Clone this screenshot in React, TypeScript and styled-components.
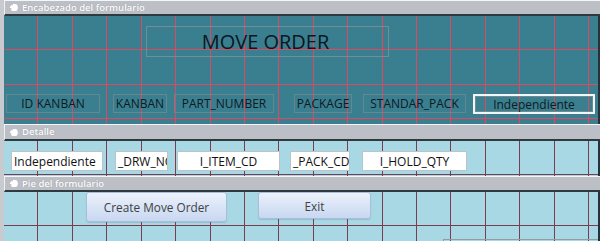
import React from "react";
import styled, { createGlobalStyle } from "styled-components";

const Global = createGlobalStyle`
  html, body { margin: 0; padding: 0; background: #c7cacf; }
  body { font-family: "Open Sans", "Liberation Sans", sans-serif; overflow: hidden; }
  * { box-sizing: border-box; }
`;

const Frame = styled.div`
  width: 600px;
  height: 241px;
  overflow: hidden;
  background: #c7cacf;
  padding-left: 4px;
  display: flex;
  flex-direction: column;
`;

const SectionBar = styled.div<{ $h: number }>`
  height: ${(p) => p.$h}px;
  flex: none;
  background: #bcbfc5;
  border-top: 1px solid #f5f6f8;
  border-left: 1px solid #eef0f2;
  border-bottom: 2px solid #2d3a40;
  display: flex;
  align-items: center;
  gap: 4px;
  padding-left: 4px;
`;

const BarTitle = styled.span`
  color: #ffffff;
  font-size: 9.5px;
  font-weight: 600;
  line-height: 12px;
  text-shadow: 0 0 1px rgba(90, 92, 100, 0.45);
  white-space: nowrap;
`;

const Canvas = styled.div<{ $h?: number; $bg: string; $line: string }>`
  ${(p) => (p.$h ? `height: ${p.$h}px; flex: none;` : "flex: 1;")}
  background-color: ${(p) => p.$bg};
  background-image: repeating-linear-gradient(
      to right,
      transparent 0 33.42px,
      ${(p) => p.$line} 33.42px 34.42px
    ),
    repeating-linear-gradient(
      to bottom,
      transparent 0 33.42px,
      ${(p) => p.$line} 33.42px 34.42px
    );
  border-right: 2px solid #25323a;
  display: flex;
  flex-direction: column;
  overflow: hidden;
`;

const HeaderCanvas = styled(Canvas)`
  padding-top: 10px;
`;

const DetailCanvas = styled(Canvas)`
  padding-top: 10px;
`;

const TitleBox = styled.div`
  margin-left: 142px;
  width: 243px;
  height: 31px;
  border: 1px solid #6f8e96;
  display: flex;
  align-items: center;
  justify-content: center;
  font-size: 20px;
  color: #0d161c;
  padding-right: 4px;
`;

const Row = styled.div<{ $mt?: number }>`
  display: flex;
  align-items: flex-start;
  margin-top: ${(p) => p.$mt ?? 0}px;
`;

const Label = styled.div<{ $w: number; $ml: number; $selected?: boolean }>`
  width: ${(p) => p.$w}px;
  margin-left: ${(p) => p.$ml}px;
  height: ${(p) => (p.$selected ? 20 : 19)}px;
  border: ${(p) => (p.$selected ? "2px solid #f2f6f7" : "1px solid #66878f")};
  box-shadow: ${(p) => (p.$selected ? "inset 0 0 0 1px #6c8c94" : "none")};
  display: flex;
  align-items: center;
  justify-content: center;
  font-size: 12px;
  color: #0e1920;
  white-space: nowrap;
  overflow: hidden;
`;

const Field = styled.div<{ $w: number; $ml: number; $align: "left" | "center" }>`
  width: ${(p) => p.$w}px;
  margin-left: ${(p) => p.$ml}px;
  height: 20px;
  background: #ffffff;
  border: 1px solid #bcc4c7;
  display: flex;
  align-items: center;
  justify-content: ${(p) => (p.$align === "center" ? "center" : "flex-start")};
  padding-left: ${(p) => (p.$align === "center" ? 0 : 2)}px;
  font-size: 12px;
  color: #111;
  white-space: nowrap;
  overflow: hidden;
`;

const Button = styled.div<{ $w: number; $h: number; $ml: number }>`
  width: ${(p) => p.$w}px;
  height: ${(p) => p.$h}px;
  margin-left: ${(p) => p.$ml}px;
  background: linear-gradient(#eef3fc, #dbe5f6 45%, #c8d8f1);
  border: 1px solid #a9bddc;
  border-radius: 3px;
  box-shadow: 0 1px 1px rgba(60, 80, 110, 0.18);
  display: flex;
  align-items: center;
  justify-content: center;
  font-size: 11.8px;
  color: #3e4144;
`;

const GhostBox = styled.div`
  margin-left: 439px;
  width: 160px;
  height: 6px;
  border-top: 1px solid #8e9ea4;
  border-left: 1px solid #8e9ea4;
`;

const SelectorIcon = () => (
  <svg width="9" height="9" viewBox="0 0 9 9" aria-hidden>
    <path
      d="M0.6 4.4 L2.4 2 L3.3 2.6 L4 0.9 L6.3 0.9 Q8.8 1.1 8.8 4.6 Q8.8 8.1 6.3 8.1 L3.4 8.1 L1.8 6.8 L2.7 5.5 Z"
      fill="#ffffff"
    />
  </svg>
);

const Bar = ({ title, h }: { title: string; h: number }) => (
  <SectionBar $h={h}>
    <SelectorIcon />
    <BarTitle>{title}</BarTitle>
  </SectionBar>
);

const headerLabels = [
  { t: "ID KANBAN", w: 94, ml: 2 },
  { t: "KANBAN", w: 54, ml: 13 },
  { t: "PART_NUMBER", w: 100, ml: 7 },
  { t: "PACKAGE", w: 58, ml: 20 },
  { t: "STANDAR_PACK", w: 103, ml: 11 },
];

const fields: { t: string; w: number; ml: number; a: "left" | "center" }[] = [
  { t: "Independiente", w: 92, ml: 7, a: "left" },
  { t: "_DRW_NO", w: 53, ml: 12, a: "left" },
  { t: "I_ITEM_CD", w: 103, ml: 9, a: "center" },
  { t: "_PACK_CD", w: 60, ml: 10, a: "left" },
  { t: "I_HOLD_QTY", w: 105, ml: 12, a: "center" },
];

export default function App() {
  return (
    <>
      <Global />
      <Frame>
        <Bar title="Encabezado del formulario" h={16} />
        <HeaderCanvas $h={108} $bg="#3a7f90" $line="#de4860">
          <TitleBox>MOVE ORDER</TitleBox>
          <Row $mt={37}>
            {headerLabels.map((l) => (
              <Label key={l.t} $w={l.w} $ml={l.ml}>
                {l.t}
              </Label>
            ))}
            <Label $w={122} $ml={7} $selected>
              Independiente
            </Label>
          </Row>
        </HeaderCanvas>
        <Bar title="Detalle" h={17} />
        <DetailCanvas $h={35} $bg="#a8d8e4" $line="#7c3c4f">
          <Row>
            {fields.map((f) => (
              <Field key={f.t} $w={f.w} $ml={f.ml} $align={f.a}>
                {f.t}
              </Field>
            ))}
          </Row>
        </DetailCanvas>
        <Bar title="Pie del formulario" h={16} />
        <Canvas $bg="#a8d8e4" $line="#7c3c4f">
          <Row>
            <Button $w={141} $h={30} $ml={82}>
              Create Move Order
            </Button>
            <Button $w={113} $h={27} $ml={31}>
              Exit
            </Button>
          </Row>
          <Row $mt={17}>
            <GhostBox />
          </Row>
        </Canvas>
      </Frame>
    </>
  );
}
